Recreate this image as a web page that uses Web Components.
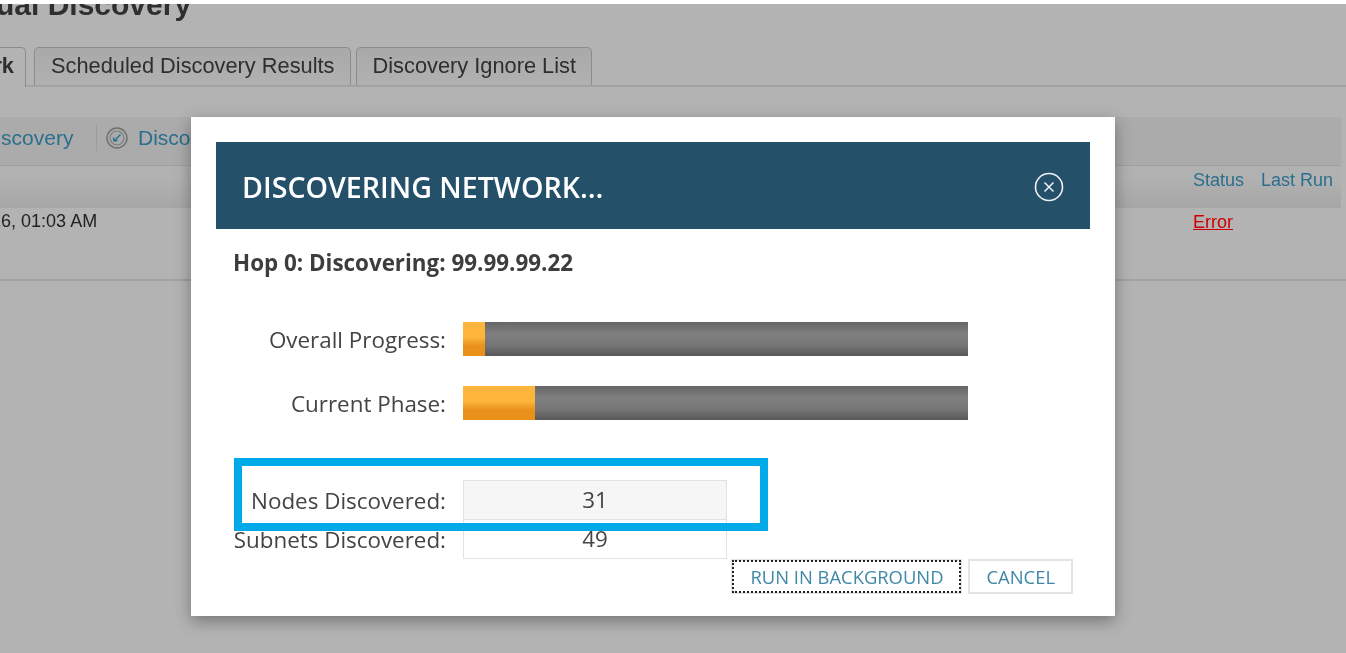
<!DOCTYPE html>
<html>
<head>
<meta charset="utf-8">
<title>Discovering network</title>
<style>
    html, body { margin: 0; height: 100%; background: #fff; overflow: hidden; }
</style>
</head>
<body>
<x-page>
    <x-tabs>
        <x-tab class="cut">Network</x-tab>
        <x-tab>Scheduled Discovery Results</x-tab>
        <x-tab>Discovery Ignore List</x-tab>
    </x-tabs>
    <x-toolbar></x-toolbar>
    <x-table></x-table>
</x-page>
<x-modal title="DISCOVERING NETWORK...">
    <x-bar label="Overall Progress:" value="22" ></x-bar>
    <x-bar label="Current Phase:" value="72"></x-bar>
    <x-stat label="Nodes Discovered:" value="31" shade></x-stat>
    <x-stat label="Subnets Discovered:" value="49"></x-stat>
</x-modal>

<script>
class XPage extends HTMLElement {
    constructor() {
        super()
        this.attachShadow({ mode: 'open' })
        this.shadowRoot.innerHTML = `
            <style>
                :host {
                    display: block;
                    height: 649px;
                    margin-top: 4px;
                    background: #b3b3b3;
                    overflow: hidden;
                    font-family: "Liberation Sans", Arial, sans-serif;
                }
                h1 {
                    margin: -16px 0 0 -64px;
                    height: 59px;
                    font-size: 30px;
                    line-height: 34px;
                    color: #2f2f2f;
                    white-space: nowrap;
                    filter: blur(.4px);
                }
            </style>
            <h1>Manual Discovery</h1>
            <slot></slot>
        `
    }
}

class XTabs extends HTMLElement {
    constructor() {
        super()
        this.attachShadow({ mode: 'open' })
        this.shadowRoot.innerHTML = `
            <style>
                :host {
                    display: flex;
                    align-items: flex-end;
                    gap: 5px;
                    height: 38px;
                    border-bottom: 2px solid #a2a2a2;
                    margin-bottom: 30px;
                    box-shadow: 0 23px 0 -21px #9f9f9f;
                }
            </style>
            <slot></slot>
        `
    }
}

class XTab extends HTMLElement {
    constructor() {
        super()
        this.attachShadow({ mode: 'open' })
        this.shadowRoot.innerHTML = `
            <style>
                :host {
                    display: block;
                    box-sizing: border-box;
                    height: 38px;
                    padding: 5px 15px 0 16px;
                    border: 1px solid #8c8c8c;
                    border-bottom: 0;
                    border-radius: 5px 5px 0 0;
                    background: linear-gradient(#a9a9a9, #b1b1b1);
                    color: #2e2e2e;
                    font-size: 21.800px;
                    line-height: 26px;
                    white-space: nowrap;
                }
                :host(.cut) {
                    margin-left: -89px;
                    margin-right: 3px;
                    padding-right: 11px;
                    font-weight: bold;
                    background: #b3b3b3;
                    height: 40px;
                    margin-bottom: -2px;
                }
                span { display: block; filter: blur(.4px); }
            </style>
            <span><slot></slot></span>
        `
    }
}

class XToolbar extends HTMLElement {
    constructor() {
        super()
        this.attachShadow({ mode: 'open' })
        this.shadowRoot.innerHTML = `
            <style>
                :host {
                    display: flex;
                    align-items: center;
                    box-sizing: border-box;
                    height: 48px;
                    margin-right: 5px;
                    padding-bottom: 6px;
                    background: #ababab;
                    color: #2b6f8e;
                    font-size: 21px;
                    overflow: hidden;
                }
                .first { margin-left: -62px; width: 135px; white-space: nowrap; }
                .sep { width: 1px; height: 26px; background: #9c9c9c; margin: 0 9px 0 23px; }
                svg { width: 22px; height: 22px; margin-right: 10px; flex: none; }
                span, svg { filter: blur(.4px); }
            </style>
            <span class="first">Add Discovery</span>
            <i class="sep"></i>
            <svg viewBox="0 0 22 22" fill="none">
                <circle cx="11" cy="11" r="10" stroke="#6e6e6e" stroke-width="1.4"/>
                <circle cx="11" cy="11" r="7" stroke="#7d7d7d" stroke-width="1.2"/>
                <path d="M14.500 7.500 8.500 13.500M7.500 10.500 8 14l3.500-.5" stroke="#2b6f8e" stroke-width="1.500"/>
            </svg>
            <span>Discovery</span>
        `
    }
}

class XTable extends HTMLElement {
    constructor() {
        super()
        this.attachShadow({ mode: 'open' })
        this.shadowRoot.innerHTML = `
            <style>
                :host {
                    display: block;
                    box-sizing: border-box;
                    height: 116px;
                    border-bottom: 2px solid #a0a0a0;
                    font-size: 18px;
                }
                .head {
                    display: flex;
                    justify-content: flex-end;
                    gap: 17px;
                    box-sizing: border-box;
                    height: 43px;
                    margin-right: 5px;
                    padding: 4px 8px 0 0;
                    border-top: 1px solid #a0a0a0;
                    background: linear-gradient(#b1b1b1 0, #b1b1b1 30%, #a6a6a6 100%);
                    color: #2b6f8e;
                }
                .row {
                    display: flex;
                    justify-content: space-between;
                    padding: 3px 0 0 0;
                    margin-right: 4px;
                    color: #222;
                }
                .when { margin-left: -93px; white-space: nowrap; }
                .err { width: 149px; color: #c00; text-decoration: underline; padding-top: 1px; }
                span { filter: blur(.4px); }
            </style>
            <div class="head"><span>Status</span><span>Last Run</span></div>
            <div class="row"><span class="when">Jan 12, 2016, 01:03 AM</span><span class="err">Error</span></div>
        `
    }
}

class XModal extends HTMLElement {
    constructor() {
        super()
        this.attachShadow({ mode: 'open' })
        let title = this.getAttribute('title')
        this.removeAttribute('title')
        this.shadowRoot.innerHTML = `
            <style>
                :host {
                    position: absolute;
                    left: 191px;
                    top: 117px;
                    box-sizing: border-box;
                    width: 924px;
                    height: 499px;
                    padding: 25px;
                    background: #fff;
                    box-shadow: 0 5px 15px rgba(0, 0, 0, .35);
                    color: #444;
                    font-family: "Open Sans", "Noto Sans", sans-serif;
                }
                header {
                    display: flex;
                    align-items: center;
                    justify-content: space-between;
                    height: 87px;
                    padding: 0 26px;
                    background: #25506a;
                    color: #fff;
                }
                h2 { margin: 2px 0 0; font-size: 28.600px; font-weight: 600; }
                svg { width: 30px; height: 30px; margin-top: 2px; }
                .hop {
                    margin: 20px 0 46px 17px;
                    font-size: 22.400px;
                    line-height: 27px;
                    font-weight: 700;
                    color: #3d3d3d;
                }
                .bars { display: flex; flex-direction: column; gap: 30px; margin-bottom: 60px; }
                .stats { display: flex; flex-direction: column; }
                footer {
                    display: flex;
                    justify-content: flex-end;
                    gap: 6px;
                    margin: 1px 17px 0 0;
                }
                .mark {
                    position: absolute;
                    left: 43px;
                    top: 341px;
                    box-sizing: border-box;
                    width: 534px;
                    height: 73px;
                    border: 8px solid #00a9e8;
                }
                h2, .hop, footer, svg { filter: blur(.25px); }
            </style>
            <header>
                <h2>${title}</h2>
                <svg viewBox="0 0 30 30" fill="none" stroke="#f0f3f5">
                    <circle cx="15" cy="15" r="13.500" stroke-width="1.600"/>
                    <path d="M10.500 10.500l9 9M19.500 10.500l-9 9" stroke-width="1.500"/>
                </svg>
            </header>
            <div class="hop">Hop 0: Discovering: 99.99.99.22</div>
            <div class="bars"><slot name="bars"></slot></div>
            <div class="stats"><slot></slot></div>
            <footer>
                <x-btn focused>RUN IN BACKGROUND</x-btn>
                <x-btn>CANCEL</x-btn>
            </footer>
            <div class="mark"></div>
        `
    }

    connectedCallback() {
        this.querySelectorAll('x-bar').forEach(function(bar) {
            bar.slot = 'bars'
        })
    }
}

class XBar extends HTMLElement {
    constructor() {
        super()
        this.attachShadow({ mode: 'open' })
        this.shadowRoot.innerHTML = `
            <style>
                :host {
                    display: grid;
                    grid-template-columns: 230px 505px;
                    column-gap: 17px;
                    align-items: center;
                    height: 34px;
                    font-size: 22.400px;
                }
                .label { text-align: right; white-space: nowrap; filter: blur(.25px); }
                .track {
                    height: 34px;
                    background: linear-gradient(#666 0, #808080 35%, #747474 70%, #585858 100%);
                }
                .fill {
                    height: 34px;
                    background: linear-gradient(#fdb53b 0, #fdb53b 45%, #e9911b 70%, #e9911b 100%);
                }
            </style>
            <div class="label">${this.getAttribute('label')}</div>
            <div class="track"><div class="fill" style="width: ${this.getAttribute('value')}px"></div></div>
        `
    }
}

class XStat extends HTMLElement {
    constructor() {
        super()
        this.attachShadow({ mode: 'open' })
        this.shadowRoot.innerHTML = `
            <style>
                :host {
                    display: grid;
                    grid-template-columns: 230px 264px;
                    column-gap: 17px;
                    align-items: center;
                    height: 39px;
                    font-size: 22.400px;
                }
                .label { text-align: right; white-space: nowrap; }
                .box {
                    box-sizing: border-box;
                    height: 40px;
                    border: 1px solid #e2e2e2;
                    text-align: center;
                    line-height: 38px;
                }
                :host([shade]) .box { background: #f6f6f6; }
                .label, .num { filter: blur(.25px); }
            </style>
            <div class="label">${this.getAttribute('label')}</div>
            <div class="box"><span class="num">${this.getAttribute('value')}</span></div>
        `
    }
}

class XBtn extends HTMLElement {
    constructor() {
        super()
        this.attachShadow({ mode: 'open' })
        this.shadowRoot.innerHTML = `
            <style>
                :host {
                    display: block;
                    box-sizing: border-box;
                    height: 35px;
                    padding: 0 16px 0 17px;
                    border: 2px solid #e4e4e4;
                    color: #4088a8;
                    font-size: 18.400px;
                    line-height: 31px;
                    white-space: nowrap;
                }
                :host([focused]) {
                    outline: 2px dotted #222;
                    outline-offset: -3px;
                }
            </style>
            <slot></slot>
        `
    }
}

window.customElements.define('x-page', XPage)
window.customElements.define('x-tabs', XTabs)
window.customElements.define('x-tab', XTab)
window.customElements.define('x-toolbar', XToolbar)
window.customElements.define('x-table', XTable)
window.customElements.define('x-bar', XBar)
window.customElements.define('x-stat', XStat)
window.customElements.define('x-btn', XBtn)
window.customElements.define('x-modal', XModal)
</script>
</body>
</html>
